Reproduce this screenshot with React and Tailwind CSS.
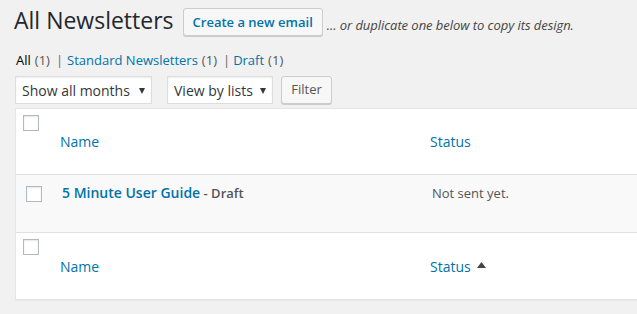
import React from "react";

function Checkbox() {
	return (
		<span className="block w-4 h-4 border border-[#b4b9be] bg-white shadow-[inset_0_1px_2px_rgba(0,0,0,0.1)]" />
	);
}

function SelectBox({ label, width }) {
	return (
		<div
			className={
				"flex items-center justify-between h-[28px] pl-[6px] pr-[6px] bg-white border border-[#ddd] shadow-[inset_0_1px_2px_rgba(0,0,0,0.07)] text-[14px] text-[#32373c] " +
				width
			}
		>
			<span>{label}</span>
			<svg width="6" height="6" viewBox="0 0 6 6" className="mt-[1px]">
				<polygon points="0,0 6,0 3,6" fill="#32373c" />
			</svg>
		</div>
	);
}

export default function App() {
	return (
		<div className="w-[637px] h-[314px] overflow-hidden bg-[#f1f1f1] font-['Open_Sans',sans-serif] text-[13px] text-[#444]">
			{/* heading */}
			<div className="flex items-start pt-[6px] pl-[14px]">
				<h1 className="text-[23px] leading-[29px] font-normal text-[#23282d]">
					All Newsletters
				</h1>
				<a className="ml-[9px] mt-[2px] h-[28px] px-[9px] border border-[#ccc] rounded-[3px] bg-[#f7f7f7] shadow-[0_1px_0_#ccc] text-[13px] leading-[26px] text-[#0073aa] font-semibold">
					Create a new email
				</a>
				<span className="ml-[4px] mt-[9px] italic text-[13px] leading-[20px] text-[#444] tracking-[-0.05px]">
					... or duplicate one below to copy its design.
				</span>
			</div>

			{/* views */}
			<div className="flex items-center pl-[16px] mt-[15px] h-[20px] text-[13px] text-[#666]">
				<span className="text-black">All</span>
				<span className="ml-[4px] text-[#555]">(1)</span>
				<span className="ml-[6px] mr-[4px] text-[#666]">|</span>
				<span className="text-[#0073aa]">Standard Newsletters</span>
				<span className="ml-[4px] text-[#555]">(1)</span>
				<span className="ml-[6px] mr-[3px] text-[#666]">|</span>
				<span className="text-[#0073aa]">Draft</span>
				<span className="ml-[4px] text-[#555]">(1)</span>
			</div>

			{/* filters */}
			<div className="flex items-center pl-[15px] mt-[5px]">
				<SelectBox label="Show all months" width="w-[137px]" />
				<div className="ml-[15px]">
					<SelectBox label="View by lists" width="w-[106px]" />
				</div>
				<button className="ml-[8px] h-[28px] w-[51px] border border-[#ccc] rounded-[3px] bg-[#f7f7f7] shadow-[0_1px_0_#ccc] text-[13px] text-[#555]">
					Filter
				</button>
			</div>

			{/* table */}
			<div className="ml-[15px] mt-[4px] w-[700px] bg-white border border-[#e5e5e5] shadow-[0_1px_1px_rgba(0,0,0,0.04)]">
				<div className="flex h-[66px] border-b border-[#e1e1e1]">
					<div className="w-[35px] pl-[7px] pt-[6px]">
						<Checkbox />
					</div>
					<div className="w-[370px] pl-[9px] flex items-center text-[14px] text-[#0073aa]">
						Name
					</div>
					<div className="flex-1 pl-[9px] flex items-center text-[14px] text-[#0073aa]">
						Status
					</div>
				</div>

				<div className="flex h-[58px] bg-[#f9f9f9] border-b border-[#e1e1e1]">
					<div className="w-[35px] pl-[10px] pt-[11px]">
						<Checkbox />
					</div>
					<div className="w-[370px] pl-[11px] pt-[8px] leading-[20px]">
						<span className="text-[14px] font-semibold text-[#0073aa]">
							5 Minute User Guide
						</span>
						<span className="text-[13px] font-semibold text-[#555]"> - Draft</span>
					</div>
					<div className="flex-1 pl-[11px] pt-[8px] leading-[20px] text-[13px] text-[#555]">
						Not sent yet.
					</div>
				</div>

				<div className="flex h-[66px]">
					<div className="w-[35px] pl-[7px] pt-[6px]">
						<Checkbox />
					</div>
					<div className="w-[370px] pl-[9px] flex items-center text-[14px] text-[#0073aa]">
						Name
					</div>
					<div className="flex-1 pl-[9px] flex items-center text-[14px] text-[#0073aa]">
						Status
						<svg width="9" height="6" viewBox="0 0 9 6" className="ml-[6px] mb-[2px]">
							<polygon points="0,6 9,6 4.5,0" fill="#444" />
						</svg>
					</div>
				</div>
			</div>
		</div>
	);
}
